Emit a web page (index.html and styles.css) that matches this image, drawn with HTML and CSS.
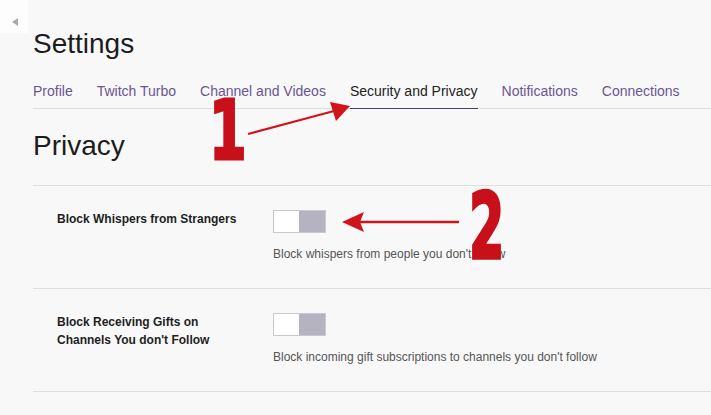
FILE: index.html
```html
<!DOCTYPE html>
<html lang="en">
<head>
<meta charset="utf-8">
<title>Settings</title>
<link rel="stylesheet" href="styles.css">
</head>
<body>
<button class="collapse" aria-label="Collapse"><span class="tri"></span></button>
<main class="page">
  <h1 class="title">Settings</h1>
  <nav class="tabs">
    <a class="tab">Profile</a>
    <a class="tab">Twitch Turbo</a>
    <a class="tab">Channel and Videos</a>
    <a class="tab active">Security and Privacy</a>
    <a class="tab">Notifications</a>
    <a class="tab">Connections</a>
  </nav>
  <h2 class="section">Privacy</h2>
  <div class="rows">
    <div class="row">
      <div class="label">Block Whispers from Strangers</div>
      <div class="control">
        <span class="toggle"><span class="knob"></span></span>
        <p class="desc">Block whispers from people you don't follow</p>
      </div>
    </div>
    <div class="row">
      <div class="label">Block Receiving Gifts on<br>Channels You don't Follow</div>
      <div class="control">
        <span class="toggle"><span class="knob"></span></span>
        <p class="desc">Block incoming gift subscriptions to channels you don't follow</p>
      </div>
    </div>
  </div>
</main>
<div class="annot">
  <svg class="arrows" width="711" height="415" viewBox="0 0 711 415">
    <line x1="248" y1="134" x2="334" y2="111" stroke="#d0141a" stroke-width="2.2"/>
    <polygon points="350,106 330,102 336,121" fill="#d0141a"/>
    <line x1="459" y1="222" x2="358" y2="222" stroke="#d0141a" stroke-width="2.4"/>
    <polygon points="342,222 364,212 360,222 364,232" fill="#d0141a"/>
  </svg>
  <span class="num num1">1</span>
  <span class="num num2">2</span>
</div>
</body>
</html>
```
FILE: styles.css
```css
* { box-sizing: border-box; }
html, body { margin: 0; padding: 0; }
body {
  background: #f8f8f9;
  font-family: "Liberation Sans", Arial, sans-serif;
  color: #1e1e1e;
  width: 711px;
  height: 415px;
  overflow: hidden;
  position: relative;
}
.collapse {
  position: absolute;
  left: 0;
  top: 0;
  width: 28px;
  height: 33px;
  border: 0;
  padding: 0;
  background: #fdfdfd;
  display: flex;
  align-items: center;
  justify-content: center;
}
.tri {
  width: 0;
  height: 0;
  border-top: 4.5px solid transparent;
  border-bottom: 4.5px solid transparent;
  border-right: 6px solid #a9a9ad;
  margin-top: 11px;
  margin-left: 2px;
}
.page {
  padding-left: 33px;
}
.title {
  margin: 28px 0 23px;
  font-size: 28px;
  line-height: 32px;
  font-weight: normal;
  color: #1c1c1c;
}
.tabs {
  display: flex;
  gap: 24px;
  border-bottom: 1px solid #dedede;
}
.tab {
  font-size: 14px;
  line-height: 17px;
  padding-bottom: 8px;
  margin-bottom: -1px;
  border-bottom: 1px solid transparent;
  color: #6a5593;
  white-space: nowrap;
}
.tab.active {
  color: #222;
  border-bottom-color: #4a3a6e;
}
.section {
  margin: 21px 0 23px;
  font-size: 28px;
  line-height: 32px;
  font-weight: normal;
  color: #1c1c1c;
}
.rows {
  border-top: 1px solid #dedede;
}
.row {
  display: flex;
  padding: 24px 0 25px 24px;
  border-bottom: 1px solid #dedede;
}
.label {
  width: 216px;
  font-size: 12px;
  line-height: 18px;
  font-weight: bold;
  color: #1e1e1e;
}
.control {
  display: flex;
  flex-direction: column;
  align-items: flex-start;
}
.toggle {
  display: flex;
  width: 53px;
  height: 23px;
  background: #b5b3bf;
  border: 1px solid #c9c7cf;
}
.knob {
  width: 25px;
  height: 100%;
  background: #ffffff;
}
.desc {
  margin: 12px 0 0;
  font-size: 12px;
  line-height: 18px;
  color: #555555;
}
.annot {
  position: absolute;
  inset: 0;
  pointer-events: none;
}
.arrows {
  position: absolute;
  left: 0;
  top: 0;
}
.num {
  position: absolute;
  font-family: "DejaVu Sans", sans-serif;
  font-weight: bold;
  color: #c8101a;
  font-size: 82px;
  line-height: 1;
  -webkit-text-stroke: 3px #c8101a;
  transform-origin: left top;
}
.num1 {
  left: 209px;
  top: 90px;
  transform: scaleX(0.66);
}
.num2 {
  left: 469px;
  top: 182px;
  transform: scaleX(0.62) scaleY(1.1);
}
```
